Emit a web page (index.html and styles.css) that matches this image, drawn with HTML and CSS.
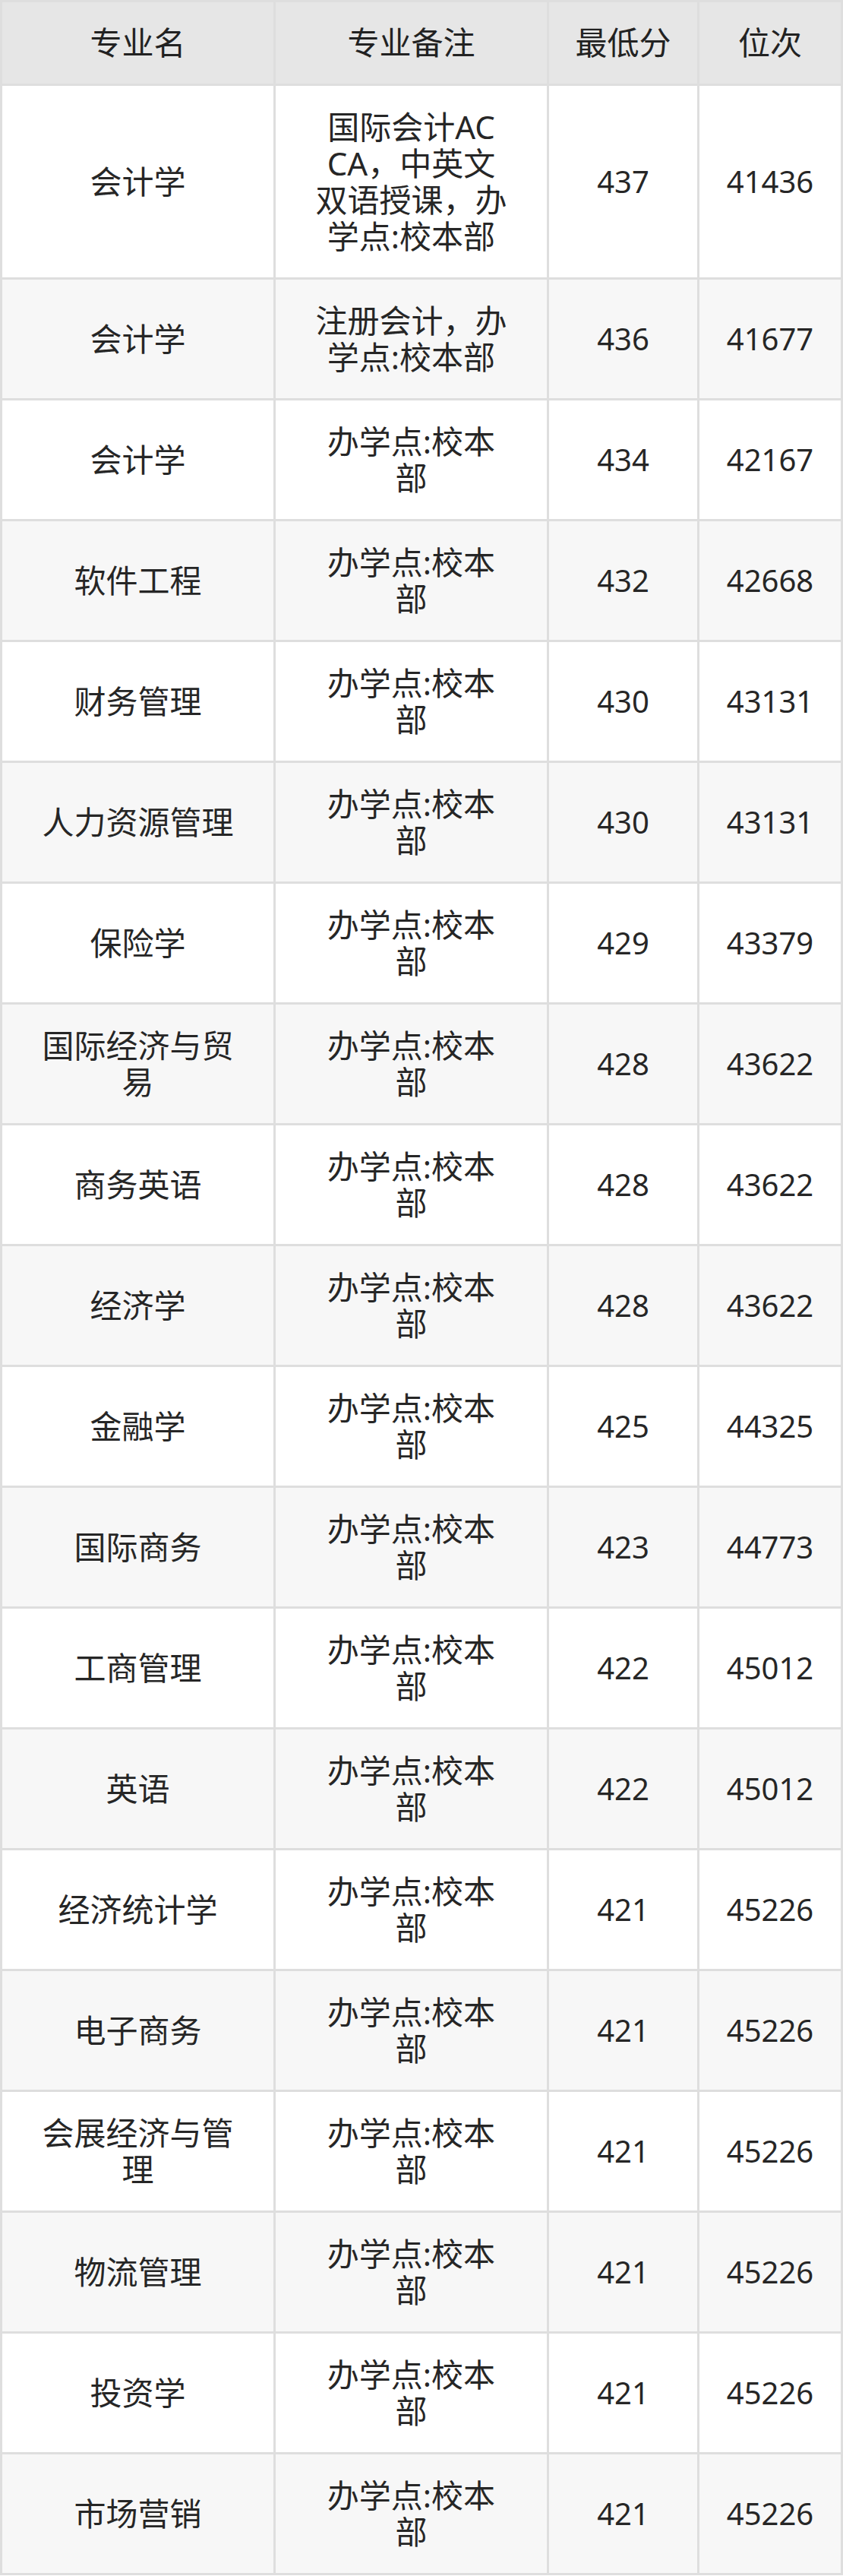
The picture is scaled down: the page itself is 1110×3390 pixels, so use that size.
FILE: index.html
```html
<!DOCTYPE html>
<html lang="zh-CN">
<head>
<meta charset="utf-8">
<title>专业录取分数</title>
<link rel="stylesheet" href="styles.css">
</head>
<body>
<div class="table">
  <div class="row head">
    <div class="cell"><span class="wrap">专业名</span></div>
    <div class="cell"><span class="wrap">专业备注</span></div>
    <div class="cell">最低分</div>
    <div class="cell">位次</div>
  </div>
  <div class="row">
    <div class="cell"><span class="wrap">会计学</span></div>
    <div class="cell"><span class="wrap">国际会计AC<br>CA，中英文<br>双语授课，办<br>学点:校本部</span></div>
    <div class="cell num">437</div>
    <div class="cell num">41436</div>
  </div>
  <div class="row">
    <div class="cell"><span class="wrap">会计学</span></div>
    <div class="cell"><span class="wrap">注册会计，办学点:校本部</span></div>
    <div class="cell num">436</div>
    <div class="cell num">41677</div>
  </div>
  <div class="row">
    <div class="cell"><span class="wrap">会计学</span></div>
    <div class="cell"><span class="wrap">办学点:校本部</span></div>
    <div class="cell num">434</div>
    <div class="cell num">42167</div>
  </div>
  <div class="row">
    <div class="cell"><span class="wrap">软件工程</span></div>
    <div class="cell"><span class="wrap">办学点:校本部</span></div>
    <div class="cell num">432</div>
    <div class="cell num">42668</div>
  </div>
  <div class="row">
    <div class="cell"><span class="wrap">财务管理</span></div>
    <div class="cell"><span class="wrap">办学点:校本部</span></div>
    <div class="cell num">430</div>
    <div class="cell num">43131</div>
  </div>
  <div class="row">
    <div class="cell"><span class="wrap">人力资源管理</span></div>
    <div class="cell"><span class="wrap">办学点:校本部</span></div>
    <div class="cell num">430</div>
    <div class="cell num">43131</div>
  </div>
  <div class="row">
    <div class="cell"><span class="wrap">保险学</span></div>
    <div class="cell"><span class="wrap">办学点:校本部</span></div>
    <div class="cell num">429</div>
    <div class="cell num">43379</div>
  </div>
  <div class="row">
    <div class="cell"><span class="wrap">国际经济与贸易</span></div>
    <div class="cell"><span class="wrap">办学点:校本部</span></div>
    <div class="cell num">428</div>
    <div class="cell num">43622</div>
  </div>
  <div class="row">
    <div class="cell"><span class="wrap">商务英语</span></div>
    <div class="cell"><span class="wrap">办学点:校本部</span></div>
    <div class="cell num">428</div>
    <div class="cell num">43622</div>
  </div>
  <div class="row">
    <div class="cell"><span class="wrap">经济学</span></div>
    <div class="cell"><span class="wrap">办学点:校本部</span></div>
    <div class="cell num">428</div>
    <div class="cell num">43622</div>
  </div>
  <div class="row">
    <div class="cell"><span class="wrap">金融学</span></div>
    <div class="cell"><span class="wrap">办学点:校本部</span></div>
    <div class="cell num">425</div>
    <div class="cell num">44325</div>
  </div>
  <div class="row">
    <div class="cell"><span class="wrap">国际商务</span></div>
    <div class="cell"><span class="wrap">办学点:校本部</span></div>
    <div class="cell num">423</div>
    <div class="cell num">44773</div>
  </div>
  <div class="row">
    <div class="cell"><span class="wrap">工商管理</span></div>
    <div class="cell"><span class="wrap">办学点:校本部</span></div>
    <div class="cell num">422</div>
    <div class="cell num">45012</div>
  </div>
  <div class="row">
    <div class="cell"><span class="wrap">英语</span></div>
    <div class="cell"><span class="wrap">办学点:校本部</span></div>
    <div class="cell num">422</div>
    <div class="cell num">45012</div>
  </div>
  <div class="row">
    <div class="cell"><span class="wrap">经济统计学</span></div>
    <div class="cell"><span class="wrap">办学点:校本部</span></div>
    <div class="cell num">421</div>
    <div class="cell num">45226</div>
  </div>
  <div class="row">
    <div class="cell"><span class="wrap">电子商务</span></div>
    <div class="cell"><span class="wrap">办学点:校本部</span></div>
    <div class="cell num">421</div>
    <div class="cell num">45226</div>
  </div>
  <div class="row">
    <div class="cell"><span class="wrap">会展经济与管理</span></div>
    <div class="cell"><span class="wrap">办学点:校本部</span></div>
    <div class="cell num">421</div>
    <div class="cell num">45226</div>
  </div>
  <div class="row">
    <div class="cell"><span class="wrap">物流管理</span></div>
    <div class="cell"><span class="wrap">办学点:校本部</span></div>
    <div class="cell num">421</div>
    <div class="cell num">45226</div>
  </div>
  <div class="row">
    <div class="cell"><span class="wrap">投资学</span></div>
    <div class="cell"><span class="wrap">办学点:校本部</span></div>
    <div class="cell num">421</div>
    <div class="cell num">45226</div>
  </div>
  <div class="row">
    <div class="cell"><span class="wrap">市场营销</span></div>
    <div class="cell"><span class="wrap">办学点:校本部</span></div>
    <div class="cell num">421</div>
    <div class="cell num">45226</div>
  </div>
</div>
</body>
</html>
```

FILE: styles.css
```css
html, body {
  margin: 0;
  padding: 0;
  background: #ffffff;
}

body {
  font-family: "Noto Sans", "Noto Sans CJK SC", sans-serif;
  color: #262626;
}

.table {
  box-sizing: border-box;
  width: 1110px;
  display: grid;
  grid-template-columns: 357px 357px 195px 186px;
  gap: 3px;
  padding: 3px;
  background: #dedede;
}

.row {
  display: contents;
}

.cell {
  display: flex;
  align-items: center;
  justify-content: center;
  text-align: center;
  padding: 30px 8px;
  font-size: 42px;
  line-height: 48px;
  background: #ffffff;
  word-break: break-all;
}

.cell.num {
  font-size: 40px;
}

.row:nth-child(odd) .cell {
  background: #f7f7f7;
}

.row.head .cell {
  background: #e6e6e6;
  padding-top: 29px;
  padding-bottom: 30px;
}

.head {
  color: #222222;
}

.wrap {
  display: block;
  max-width: 256px;
  text-align: center;
}
```
